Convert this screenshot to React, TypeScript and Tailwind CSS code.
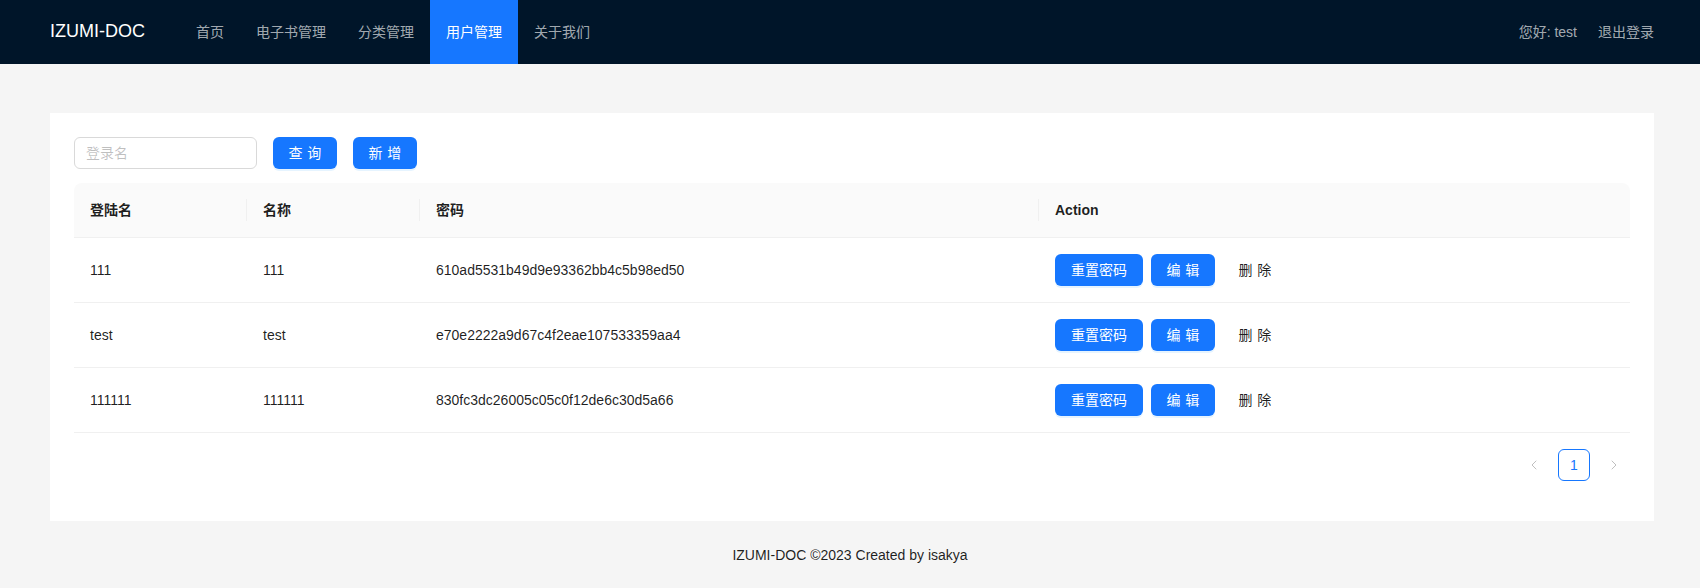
import { ChevronLeft, ChevronRight } from "lucide-react";

const font = "font-['Liberation_Sans','Noto_Sans_CJK_SC',sans-serif]";

const menu = ["首页", "电子书管理", "分类管理", "用户管理", "关于我们"];

const users = [
  { login: "111", name: "111", pwd: "610ad5531b49d9e93362bb4c5b98ed50" },
  { login: "test", name: "test", pwd: "e70e2222a9d67c4f2eae107533359aa4" },
  { login: "111111", name: "111111", pwd: "830fc3dc26005c05c0f12de6c30d5a66" },
];

const cols = "grid grid-cols-[173px_173px_619px_1fr]";

const TwoChars = ({ text }: { text: string }) => (
  <span className="tracking-[0.34em] -mr-[0.34em]">{text}</span>
);

const PrimaryButton = ({ children, className = "" }: { children: React.ReactNode; className?: string }) => (
  <button
    className={`h-8 rounded-md bg-[#1677ff] text-white text-sm shadow-[0_2px_0_rgba(5,145,255,0.1)] flex items-center justify-center ${className}`}
  >
    {children}
  </button>
);

const HeadCell = ({ title, divider }: { title: string; divider?: boolean }) => (
  <div className="relative px-4 h-[54px] flex items-center font-semibold text-[rgba(0,0,0,0.88)]">
    {title}
    {divider && (
      <span className="absolute right-0 top-1/2 -translate-y-1/2 w-px h-[22px] bg-[#f0f0f0]" />
    )}
  </div>
);

export default function App() {
  return (
    <div className={`${font} min-h-[588px] bg-[#f5f5f5] flex flex-col text-sm`}>
      {/* Header */}
      <header className="h-16 bg-[#001529] flex items-center pl-[50px] pr-[46px]">
        <div className="w-[130px] text-white text-[18px]">IZUMI-DOC</div>
        <nav className="flex h-16">
          {menu.map((m) => (
            <div
              key={m}
              className={`px-4 h-16 flex items-center ${
                m === "用户管理" ? "bg-[#1677ff] text-white" : "text-[rgba(255,255,255,0.65)]"
              }`}
            >
              {m}
            </div>
          ))}
        </nav>
        <div className="ml-auto flex items-center gap-[21px] text-[rgba(255,255,255,0.65)]">
          <span>您好: test</span>
          <span>退出登录</span>
        </div>
      </header>

      {/* Content */}
      <main className="pl-[50px] pr-[46px] pt-[49px]">
        <div className="bg-white p-6">
          <div className="flex items-center gap-4">
            <input
              placeholder="登录名"
              className="w-[183px] h-8 rounded-md border border-[#d9d9d9] px-[11px] text-sm outline-none placeholder:text-[rgba(0,0,0,0.25)]"
            />
            <PrimaryButton className="w-16">
              <TwoChars text="查询" />
            </PrimaryButton>
            <PrimaryButton className="w-16">
              <TwoChars text="新增" />
            </PrimaryButton>
          </div>

          <div className="mt-[14px]">
            <div className={`${cols} bg-[#fafafa] rounded-t-lg border-b border-[#f0f0f0]`}>
              <HeadCell title="登陆名" divider />
              <HeadCell title="名称" divider />
              <HeadCell title="密码" divider />
              <HeadCell title="Action" />
            </div>
            {users.map((u) => (
              <div key={u.pwd} className={`${cols} h-[65px] border-b border-[#f0f0f0] text-[rgba(0,0,0,0.88)]`}>
                <div className="px-4 flex items-center">{u.login}</div>
                <div className="px-4 flex items-center">{u.name}</div>
                <div className="px-4 flex items-center">{u.pwd}</div>
                <div className="px-4 flex items-center gap-2">
                  <PrimaryButton className="w-[88px]">重置密码</PrimaryButton>
                  <PrimaryButton className="w-16">
                    <TwoChars text="编辑" />
                  </PrimaryButton>
                  <button className="w-16 h-8 flex items-center justify-center text-[rgba(0,0,0,0.88)]">
                    <TwoChars text="删除" />
                  </button>
                </div>
              </div>
            ))}
          </div>

          <div className="flex justify-end items-center gap-2 my-4">
            <div className="w-8 h-8 flex items-center justify-center text-[rgba(0,0,0,0.3)]">
              <ChevronLeft size={16} strokeWidth={1.25} />
            </div>
            <div className="w-8 h-8 rounded-md border border-[#1677ff] text-[#1677ff] font-medium flex items-center justify-center">
              1
            </div>
            <div className="w-8 h-8 flex items-center justify-center text-[rgba(0,0,0,0.3)]">
              <ChevronRight size={16} strokeWidth={1.25} />
            </div>
          </div>
        </div>
      </main>

      {/* Footer */}
      <footer className="py-6 text-center text-[rgba(0,0,0,0.88)]">IZUMI-DOC ©2023 Created by isakya</footer>
    </div>
  );
}
